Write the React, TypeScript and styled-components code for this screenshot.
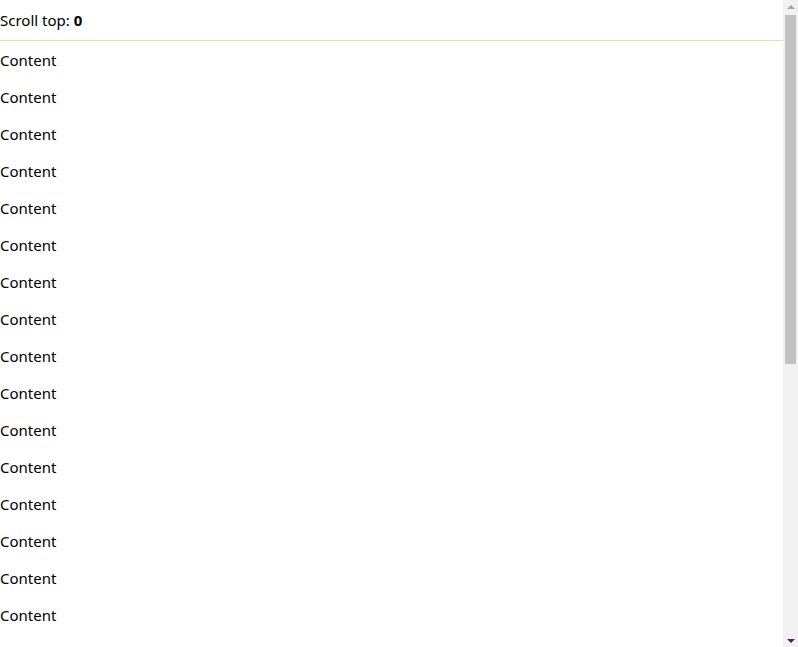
import React, { useState, useEffect, useRef } from 'react'
import styled, { createGlobalStyle } from 'styled-components'

const GlobalStyle = createGlobalStyle`
  html, body {
    margin: 0;
    padding: 0;
    background: #ffffff;
    overflow: hidden;
  }
  body {
    font-family: "Segoe UI", "Noto Sans", "Open Sans", sans-serif;
    font-size: 15px;
    color: #000000;
  }
`

const Frame = styled.div`
  display: flex;
  height: 100vh;
`

const Pane = styled.div`
  flex: 1;
  overflow-y: auto;
  scrollbar-width: none;

  &::-webkit-scrollbar {
    display: none;
  }
`

const Header = styled.div`
  position: sticky;
  top: 0;
  height: 40px;
  display: flex;
  align-items: center;
  background: #ffffff;
  border-bottom: 1px solid #f0dea0;
  z-index: 1;
`

const Value = styled.b`
  font-weight: 700;
  margin-left: 4px;
`

const ContentList = styled.div`
  display: flex;
  flex-direction: column;
  gap: 16px;
  padding-top: 9px;
`

const ContentItem = styled.div`
  line-height: 21px;
`

const ScrollBar = styled.div`
  width: 15px;
  flex-shrink: 0;
  display: flex;
  flex-direction: column;
  background: #f1f1f1;
`

const ArrowButton = styled.div<{ $down?: boolean }>`
  height: 15px;
  display: flex;
  align-items: center;
  justify-content: center;

  &::after {
    content: '';
    width: 0;
    height: 0;
    border-left: 4px solid transparent;
    border-right: 4px solid transparent;
    ${p =>
      p.$down
        ? 'border-top: 4px solid #4f2251; margin-top: 2px;'
        : 'border-bottom: 4px solid #a3a3a3; margin-top: -2px;'}
  }
`

const Track = styled.div`
  flex: 1;
  display: flex;
  flex-direction: column;
`

const Thumb = styled.div`
  margin: 0 2px;
  background: #c1c1c1;
`

const items = Array.from({ length: 30 }, (_, i) => i)

const App: React.FC = () => {
  const paneRef = useRef<HTMLDivElement>(null)
  const trackRef = useRef<HTMLDivElement>(null)
  const [scrollTop, setScrollTop] = useState(0)
  const [thumb, setThumb] = useState({ top: 0, height: 350 })

  useEffect(() => {
    const pane = paneRef.current
    const track = trackRef.current
    if (!pane || !track) return
    const update = () => {
      const trackLen = track.clientHeight
      const height = (trackLen * pane.clientHeight) / pane.scrollHeight
      const maxScroll = pane.scrollHeight - pane.clientHeight
      const top = maxScroll > 0 ? ((trackLen - height) * pane.scrollTop) / maxScroll : 0
      setThumb({ top, height })
      setScrollTop(Math.round(pane.scrollTop))
    }
    update()
    pane.addEventListener('scroll', update)
    window.addEventListener('resize', update)
    return () => {
      pane.removeEventListener('scroll', update)
      window.removeEventListener('resize', update)
    }
  }, [])

  return (
    <>
      <GlobalStyle />
      <Frame>
        <Pane ref={paneRef}>
          <Header>
            Scroll top:<Value>{scrollTop}</Value>
          </Header>
          <ContentList>
            {items.map(i => (
              <ContentItem key={i}>Content</ContentItem>
            ))}
          </ContentList>
        </Pane>
        <ScrollBar>
          <ArrowButton />
          <Track ref={trackRef}>
            <Thumb style={{ marginTop: thumb.top, height: thumb.height }} />
          </Track>
          <ArrowButton $down />
        </ScrollBar>
      </Frame>
    </>
  )
}

export default App
